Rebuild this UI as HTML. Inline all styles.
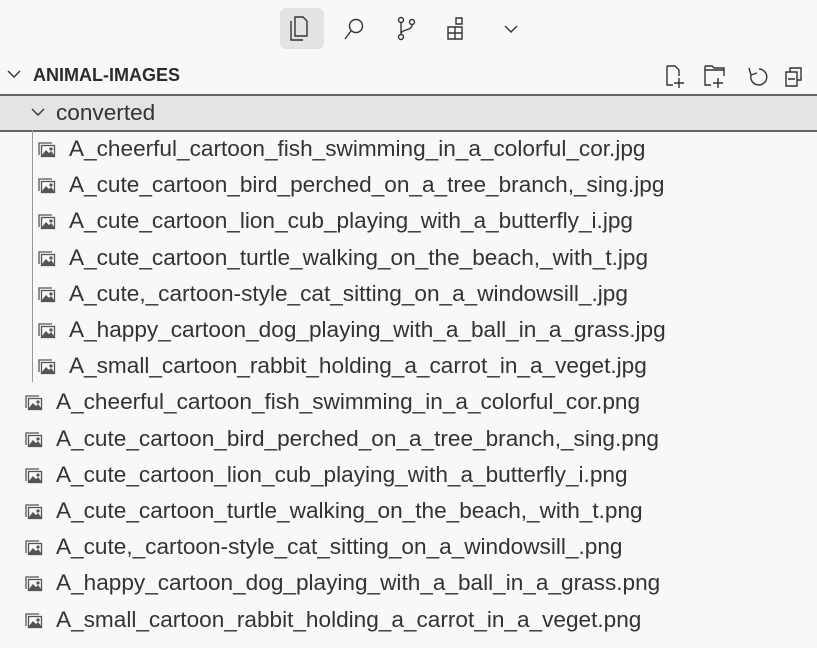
<!DOCTYPE html>
<html><head><meta charset="utf-8"><style>
body{margin:0;width:817px;height:648px;background:#f8f8f8;font-family:"Liberation Sans",sans-serif;color:#333;overflow:hidden;position:relative}
.a{position:absolute}
.row{position:absolute;left:0;width:817px;height:36px;font-size:22.6px;line-height:36px;white-space:nowrap}
.row svg{position:absolute;top:11px}
.row span{position:absolute}
</style></head><body>
<div class="a" style="left:280px;top:8px;width:44px;height:41px;background:#e3e3e3;border-radius:6px"></div>
<svg class="a" style="left:0;top:0" width="817" height="60" fill="none" stroke="#333" stroke-width="1.4">
<path d="M295 17h8l4 4v15h-12z M291 21v19h12"/>
<circle cx="356" cy="26" r="6.5"/><path d="M351 31l-6 8"/>
<circle cx="401" cy="20" r="2.5"/><circle cx="401" cy="37" r="2.5"/><circle cx="412" cy="22" r="2.5"/><path d="M401 23v11 M412 25c0 6-11 4-11 9"/>
<path d="M448 27h14v12h-14z M455 27v12 M448 33h14 M456 18h6v6h-6z"/>
<path d="M505 26l6 6 6-6"/>
</svg>
<svg class="a" style="left:0;top:60px" width="817" height="35" fill="none" stroke="#333" stroke-width="1.4">
<path d="M8 11l6 6 6-6"/>
<path d="M667 6h8l4 4v6 M667 6v19h6 M679 18v10 M674 23h10"/>
<path d="M705 6h7l2 2h10v8 M705 6v19h6 M705 10h19 M718 18v10 M713 23h10"/>
<path d="M759 9a8 8 0 1 1-8 6 M749 8l2 7 6-2"/>
<path d="M786 12h11v14h-11z M790 12v-4h11v12h-4 M788 19h7"/>
</svg>
<div class="a" style="left:33px;top:65px;font-size:18px;font-weight:bold;color:#2b2b2b">ANIMAL-IMAGES</div>
<div class="row" style="top:94px;background:#e4e4e4;border-top:2px solid #666;border-bottom:2px solid #666;height:34px;line-height:34px">
<svg style="left:31px;top:10px" width="14" height="12" fill="none" stroke="#333" stroke-width="1.4"><path d="M1 3l6 6 6-6"/></svg>
<span style="left:56px">converted</span></div>
<div class="a" style="left:32px;top:130px;width:1px;height:252px;background:#999"></div>
<div id="list"></div>
<script>
var jpg=["A_cheerful_cartoon_fish_swimming_in_a_colorful_cor","A_cute_cartoon_bird_perched_on_a_tree_branch,_sing","A_cute_cartoon_lion_cub_playing_with_a_butterfly_i","A_cute_cartoon_turtle_walking_on_the_beach,_with_t","A_cute,_cartoon-style_cat_sitting_on_a_windowsill_","A_happy_cartoon_dog_playing_with_a_ball_in_a_grass","A_small_cartoon_rabbit_holding_a_carrot_in_a_veget"];
var h="";
function ic(x){return '<svg style="left:'+x+'px" width="18" height="16" fill="none" stroke="#555" stroke-width="1.3"><path d="M1 13V1h13"/><rect x="3.5" y="3.5" width="13" height="11"/><path d="M4 14l4-5 3 3 2-2 3 4z" fill="#555"/><circle cx="13" cy="7" r="1" fill="#555"/></svg>';}
var names=jpg.map(function(n){return [n+".jpg",38,69]}).concat(jpg.map(function(n){return [n+".png",25,56]}));
names.forEach(function(r,i){var t=131+i*36.2;h+='<div class="row" style="top:'+t+'px">'+ic(r[1])+'<span style="left:'+r[2]+'px">'+r[0]+'</span></div>';});
document.getElementById("list").innerHTML=h;
</script>
</body></html>
